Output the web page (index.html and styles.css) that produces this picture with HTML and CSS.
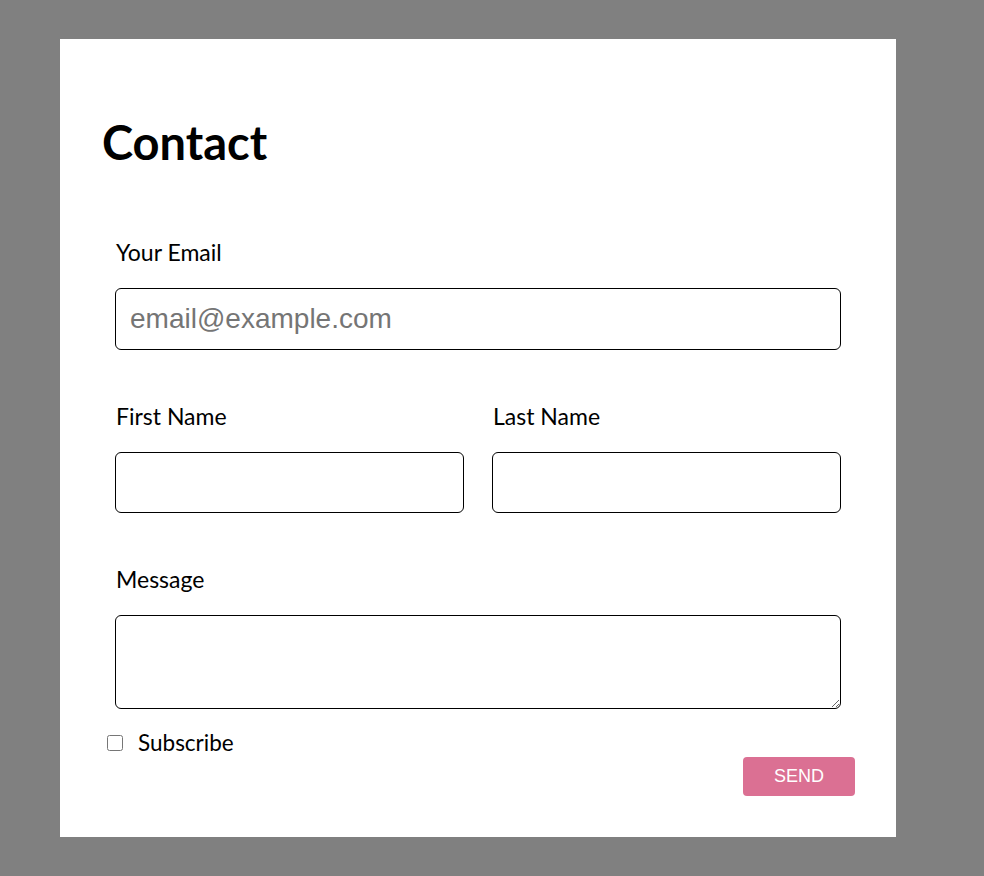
FILE: index.html
```html
<!DOCTYPE html>
<html>
<head>
<meta charset="utf-8">
<title>Contact</title>
<link rel="stylesheet" href="styles.css">
</head>
<body>
<main class="card">
  <h1 class="title">Contact</h1>
  <form class="form">
    <div class="field">
      <label class="label" for="email">Your Email</label>
      <input class="input input-email" id="email" type="email" placeholder="email@example.com">
    </div>
    <div class="row">
      <div class="field">
        <label class="label" for="first">First Name</label>
        <input class="input input-name" id="first" type="text">
      </div>
      <div class="field">
        <label class="label" for="last">Last Name</label>
        <input class="input input-name" id="last" type="text">
      </div>
    </div>
    <div class="field field-msg">
      <label class="label" for="msg">Message</label>
      <textarea class="input textarea" id="msg"></textarea>
    </div>
  </form>
  <div class="footer">
    <label class="check"><input type="checkbox" class="checkbox"><span>Subscribe</span></label>
    <button class="send" type="button">SEND</button>
  </div>
</main>
</body>
</html>
```
FILE: styles.css
```css
html, body {
  margin: 0;
  padding: 0;
}
body {
  background: #808080;
  padding: 39px 0 0 60px;
  font-family: Lato, "Noto Sans", sans-serif;
  color: #000;
  height: 876px;
  box-sizing: border-box;
}
.card {
  width: 836px;
  height: 798px;
  background: #fff;
  box-sizing: border-box;
  padding: 74px 41px 0 42px;
}
.title {
  margin: 0;
  font-size: 47px;
  font-weight: 700;
  line-height: 58px;
}
.form {
  margin: 0;
  padding: 67px 14px 0 13px;
  display: flex;
  flex-direction: column;
  gap: 52px;
}
.field {
  display: flex;
  flex-direction: column;
  gap: 22px;
}
.label {
  font-size: 23px;
  line-height: 28px;
  padding-left: 1px;
}
.row {
  display: grid;
  grid-template-columns: 1fr 1fr;
  column-gap: 28px;
}
.input {
  box-sizing: border-box;
  height: 62px;
  width: 100%;
  border: 1px solid #000;
  border-radius: 6px;
  margin: 0;
  padding: 0 14px;
  font-family: "Liberation Sans", Arial, sans-serif;
  font-size: 28px;
  background: #fff;
}
.input-name {
  height: 61px;
}
.input::placeholder {
  color: #757575;
}
.textarea {
  height: 94px;
  resize: vertical;
}
.footer {
  display: flex;
  justify-content: space-between;
  align-items: flex-start;
  padding: 20px 0 0 5px;
}
.check {
  display: flex;
  align-items: center;
  gap: 15px;
  font-size: 22.5px;
  line-height: 28px;
}
.checkbox {
  margin: 0;
  width: 16px;
  height: 16px;
}
.send {
  margin-top: 28px;
  width: 112px;
  height: 39px;
  border: none;
  border-radius: 4px;
  background: palevioletred;
  color: #fff;
  font-family: "Liberation Sans", Arial, sans-serif;
  font-size: 18px;
  padding: 0;
}
```
